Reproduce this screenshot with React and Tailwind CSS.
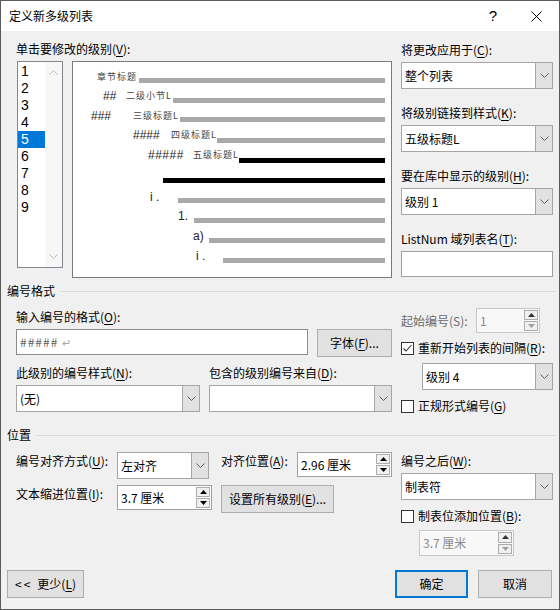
import React from "react";

function Chevron({ up, color = "#5f5f5f" }) {
  return (
    <svg width="9" height="5" viewBox="0 0 9 5" className="block">
      <path d={up ? "M0.5 4.5 L4.5 0.5 L8.5 4.5" : "M0.5 0.5 L4.5 4.5 L8.5 0.5"} fill="none" stroke={color} strokeWidth="1" />
    </svg>
  );
}

function Tri({ up, color = "#000" }) {
  return (
    <svg width="7" height="4" viewBox="0 0 7 4" className="block">
      <polygon points={up ? "0,4 3.5,0 7,4" : "0,0 7,0 3.5,4"} fill={color} />
    </svg>
  );
}

function Combo({ className = "", text }) {
  return (
    <div className={"flex h-[27px] border border-[#a6a6a6] bg-white " + className}>
      <div className="flex-1 whitespace-nowrap pl-[3px] leading-[25px]">{text}</div>
      <div className="flex w-[17px] items-center justify-center border-l border-[#a6a6a6] bg-[#e1e1e1]">
        <Chevron />
      </div>
    </div>
  );
}

function Spin({ className = "", text, disabled }) {
  return (
    <div
      className={
        "flex h-[25px] border " +
        (disabled ? "border-[#c8c8c8] bg-[#f8f8f8] text-[#8a8a8a] " : "border-[#a0a0a0] bg-white ") +
        className
      }
    >
      <div className="flex-1 whitespace-nowrap pl-[3px] leading-[23px]">{text}</div>
      <div className="flex w-[15px] flex-col gap-[1px] py-[1px] pr-[1px]">
        <div className="flex flex-1 items-center justify-center border border-[#adadad] bg-[#f0f0f0]">
          <Tri up color={disabled ? "#333" : "#000"} />
        </div>
        <div className="flex flex-1 items-center justify-center border border-[#adadad] bg-[#f0f0f0]">
          <Tri color={disabled ? "#a0a0a0" : "#000"} />
        </div>
      </div>
    </div>
  );
}

function Check({ checked }) {
  return (
    <div className="flex h-[13px] w-[13px] items-center justify-center border border-[#333] bg-white">
      {checked && (
        <svg width="11" height="11" viewBox="0 0 11 11" className="block">
          <path d="M1.5 5.5 L4 8 L9.5 2" fill="none" stroke="#333" strokeWidth="1.1" />
        </svg>
      )}
    </div>
  );
}

function Button({ className = "", children }) {
  return (
    <div className={"flex h-[28px] items-center justify-center border border-[#adadad] bg-[#e1e1e1] " + className}>
      {children}
    </div>
  );
}

function U({ children }) {
  return <span className="underline underline-offset-2">{children}</span>;
}

function ListBox() {
  const items = [1, 2, 3, 4, 5, 6, 7, 8, 9];
  return (
    <div className="ml-[1px] flex h-[207px] w-[46px] border border-[#828790] bg-white">
      <div className="w-[27px] pt-[1px] font-['Liberation_Sans',sans-serif] text-[14px]">
        {items.map((n) => (
          <div
            key={n}
            className={
              n === 5
                ? "h-[17px] bg-[#0078d7] pl-[3px] leading-[17px] text-white"
                : "h-[17px] pl-[3px] leading-[17px]"
            }
          >
            {n}
          </div>
        ))}
      </div>
      <div className="flex flex-1 flex-col items-center justify-between bg-[#f7f7f7] py-[8px]">
        <Chevron up color="#bdbdbd" />
        <Chevron color="#bdbdbd" />
      </div>
    </div>
  );
}

const hash = "shrink-0 whitespace-nowrap font-['Liberation_Sans',sans-serif] text-[12px] leading-[14px] text-[#222]";
const lbl = "shrink-0 whitespace-nowrap text-[9px] leading-[14px] tracking-[1px] text-[#444]";
const num = "shrink-0 whitespace-nowrap font-['Liberation_Sans',sans-serif] text-[12px] leading-[14px] text-[#222]";

function Preview() {
  return (
    <div className="ml-[9px] flex h-[217px] w-[320px] flex-col border border-[#7a7a7a] bg-white pt-[8px]">
      <div className="flex h-[19px] items-start">
        <span className={"ml-[24px] w-[42px] " + lbl}>章节标题</span>
        <div className="mr-[6px] mt-[8px] h-[5px] flex-1 bg-[#a9a9a9]" />
      </div>
      <div className="flex h-[20px] items-start">
        <span className={"ml-[30px] w-[23px] " + hash}>##</span>
        <span className={"w-[47px] " + lbl}>二级小节L</span>
        <div className="mr-[6px] mt-[9px] h-[5px] flex-1 bg-[#a9a9a9]" />
      </div>
      <div className="flex h-[19px] items-start">
        <span className={"ml-[18px] w-[42px] " + hash}>###</span>
        <span className={"w-[47px] " + lbl}>三级标题L</span>
        <div className="mr-[6px] mt-[8px] h-[5px] flex-1 bg-[#a9a9a9]" />
      </div>
      <div className="flex h-[20px] items-start">
        <span className={"ml-[60px] w-[38px] " + hash}>####</span>
        <span className={"w-[46px] " + lbl}>四级标题L</span>
        <div className="mr-[6px] mt-[10px] h-[5px] flex-1 bg-[#a9a9a9]" />
      </div>
      <div className="flex h-[30px] items-start">
        <span className={"ml-[75px] w-[45px] tracking-[0.5px] " + hash}>#####</span>
        <span className={"w-[46px] " + lbl}>五级标题L</span>
        <div className="mr-[6px] mt-[10px] h-[5px] flex-1 bg-black" />
      </div>
      <div className="flex h-[12px] items-start">
        <div className="ml-[90px] mr-[6px] h-[5px] flex-1 bg-black" />
      </div>
      <div className="flex h-[19px] items-start">
        <span className={"ml-[77px] w-[28px] " + num}>i .</span>
        <div className="mr-[6px] mt-[8px] h-[5px] flex-1 bg-[#a9a9a9]" />
      </div>
      <div className="flex h-[20px] items-start">
        <span className={"ml-[105px] w-[16px] " + num}>1.</span>
        <div className="mr-[6px] mt-[9px] h-[5px] flex-1 bg-[#a9a9a9]" />
      </div>
      <div className="flex h-[20px] items-start">
        <span className={"ml-[120px] w-[16px] " + num}>a)</span>
        <div className="mr-[6px] mt-[9px] h-[5px] flex-1 bg-[#a9a9a9]" />
      </div>
      <div className="flex h-[20px] items-start">
        <span className={"ml-[123px] w-[27px] " + num}>i .</span>
        <div className="mr-[6px] mt-[9px] h-[5px] flex-1 bg-[#a9a9a9]" />
      </div>
    </div>
  );
}

function Header({ children, gap }) {
  return (
    <div className="flex h-[16px] items-center pl-[6px]">
      <span className="leading-[16px]">{children}</span>
      <div className={"mr-[3px] h-px flex-1 bg-[#dcdcdc] " + gap} />
    </div>
  );
}

export default function App() {
  return (
    <div className="flex h-[610px] w-[560px] flex-col overflow-hidden border border-[#5a5a5a] bg-[#f0f0f0] font-['Noto_Sans_CJK_SC',sans-serif] text-[12px] text-black">
      {/* title bar */}
      <div className="flex h-[30px] items-center bg-white pl-[8px]">
        <span className="leading-[16px]">定义新多级列表</span>
        <span className="ml-auto mr-[34px] font-['Liberation_Sans',sans-serif] text-[15px] leading-[16px]">?</span>
        <svg width="11" height="11" viewBox="0 0 11 11" className="mr-[17px] block">
          <path d="M0.5 0.5 L10.5 10.5 M10.5 0.5 L0.5 10.5" stroke="#000" strokeWidth="1" />
        </svg>
      </div>

      {/* level list + preview */}
      <div className="flex h-[252px]">
        <div className="flex w-[400px] flex-col pl-[15px]">
          <div className="mt-[10px] leading-[16px]">
            单击要修改的级别(<U>V</U>):
          </div>
          <div className="mt-[4px] flex">
            <ListBox />
            <Preview />
          </div>
        </div>
        <div className="flex w-[152px] flex-col">
          <div className="mt-[11px] leading-[16px]">
            将更改应用于(<U>C</U>):
          </div>
          <Combo className="mt-[4px] w-[152px]" text="整个列表" />
          <div className="mt-[16px] leading-[16px]">
            将级别链接到样式(<U>K</U>):
          </div>
          <Combo className="mt-[4px] w-[152px]" text="五级标题L" />
          <div className="mt-[16px] leading-[16px]">
            要在库中显示的级别(<U>H</U>):
          </div>
          <Combo className="mt-[4px] w-[152px]" text="级别 1" />
          <div className="mt-[16px] leading-[16px]">
            ListNum 域列表名(<U>T</U>):
          </div>
          <div className="mt-[4px] h-[26px] w-[152px] border border-[#a0a0a0] bg-white" />
        </div>
      </div>

      <Header gap="ml-[5px]">编号格式</Header>

      {/* number format */}
      <div className="flex h-[128px]">
        <div className="flex w-[400px] flex-col pl-[15px]">
          <div className="mt-[10px] leading-[16px]">
            输入编号的格式(<U>O</U>):
          </div>
          <div className="mt-[4px] flex items-start">
            <div className="flex h-[26px] w-[292px] items-center border border-[#8c8c8c] bg-white pl-[3px]">
              <span className="tracking-[1px] text-[#5f5f5f]">#####</span>
              <span className="ml-[4px] text-[11px] text-[#a8a8a8]">↵</span>
            </div>
            <Button className="ml-[9px] w-[75px]">
              <span>
                字体(<U>F</U>)...
              </span>
            </Button>
          </div>
          <div className="mt-[8px] flex leading-[16px]">
            <span className="w-[193px]">
              此级别的编号样式(<U>N</U>):
            </span>
            <span>
              包含的级别编号来自(<U>D</U>):
            </span>
          </div>
          <div className="mt-[4px] flex">
            <Combo className="w-[184px]" text="(无)" />
            <Combo className="ml-[9px] w-[183px]" text="" />
          </div>
        </div>
        <div className="flex w-[152px] flex-col">
          <div className="mt-[9px] flex h-[25px] items-center">
            <span className="w-[75px] leading-[16px] text-[#6d6d6d]">起始编号(S):</span>
            <Spin className="w-[64px]" text="1" disabled />
          </div>
          <div className="mt-[7px] flex h-[16px] items-center">
            <Check checked />
            <span className="ml-[4px] whitespace-nowrap leading-[16px]">
              重新开始列表的间隔(<U>R</U>):
            </span>
          </div>
          <Combo className="ml-[21px] mt-[7px] w-[131px]" text="级别 4" />
          <div className="mt-[8px] flex h-[16px] items-center">
            <Check />
            <span className="ml-[4px] leading-[16px]">
              正规形式编号(<U>G</U>)
            </span>
          </div>
        </div>
      </div>

      <Header gap="ml-[5px]">位置</Header>

      {/* position */}
      <div className="flex h-[127px]">
        <div className="flex w-[400px] flex-col pl-[15px]">
          <div className="mt-[9px] flex items-start">
            <span className="mt-[1px] w-[101px] leading-[16px]">
              编号对齐方式(<U>U</U>):
            </span>
            <Combo className="w-[92px]" text="左对齐" />
            <span className="ml-[12px] mt-[1px] w-[76px] leading-[16px]">
              对齐位置(<U>A</U>):
            </span>
            <Spin className="w-[95px]" text="2.96 厘米" />
          </div>
          <div className="mt-[6px] flex items-start">
            <span className="mt-[1px] w-[101px] leading-[16px]">
              文本缩进位置(<U>I</U>):
            </span>
            <Spin className="w-[95px]" text="3.7 厘米" />
            <Button className="ml-[9px] w-[113px]">
              <span>
                设置所有级别(<U>E</U>)...
              </span>
            </Button>
          </div>
        </div>
        <div className="flex w-[152px] flex-col">
          <div className="mt-[10px] leading-[16px]">
            编号之后(<U>W</U>):
          </div>
          <Combo className="mt-[4px] w-[152px]" text="制表符" />
          <div className="mt-[8px] flex h-[16px] items-center">
            <Check />
            <span className="ml-[4px] whitespace-nowrap leading-[16px]">
              制表位添加位置(<U>B</U>):
            </span>
          </div>
          <Spin className="ml-[18px] mt-[6px] h-[26px] w-[95px]" text="3.7 厘米" disabled />
        </div>
      </div>

      {/* buttons */}
      <div className="flex h-[28px]">
        <Button className="ml-[6px] w-[77px]">
          <span className="tracking-[2px]">&lt;&lt;</span>
          <span className="ml-[5px]">
            更少(<U>L</U>)
          </span>
        </Button>
        <div className="ml-auto flex h-[28px] w-[73px] items-center justify-center border-2 border-[#0078d7] bg-[#e1e1e1]">
          确定
        </div>
        <Button className="ml-[10px] mr-[7px] w-[74px]">取消</Button>
      </div>
    </div>
  );
}
